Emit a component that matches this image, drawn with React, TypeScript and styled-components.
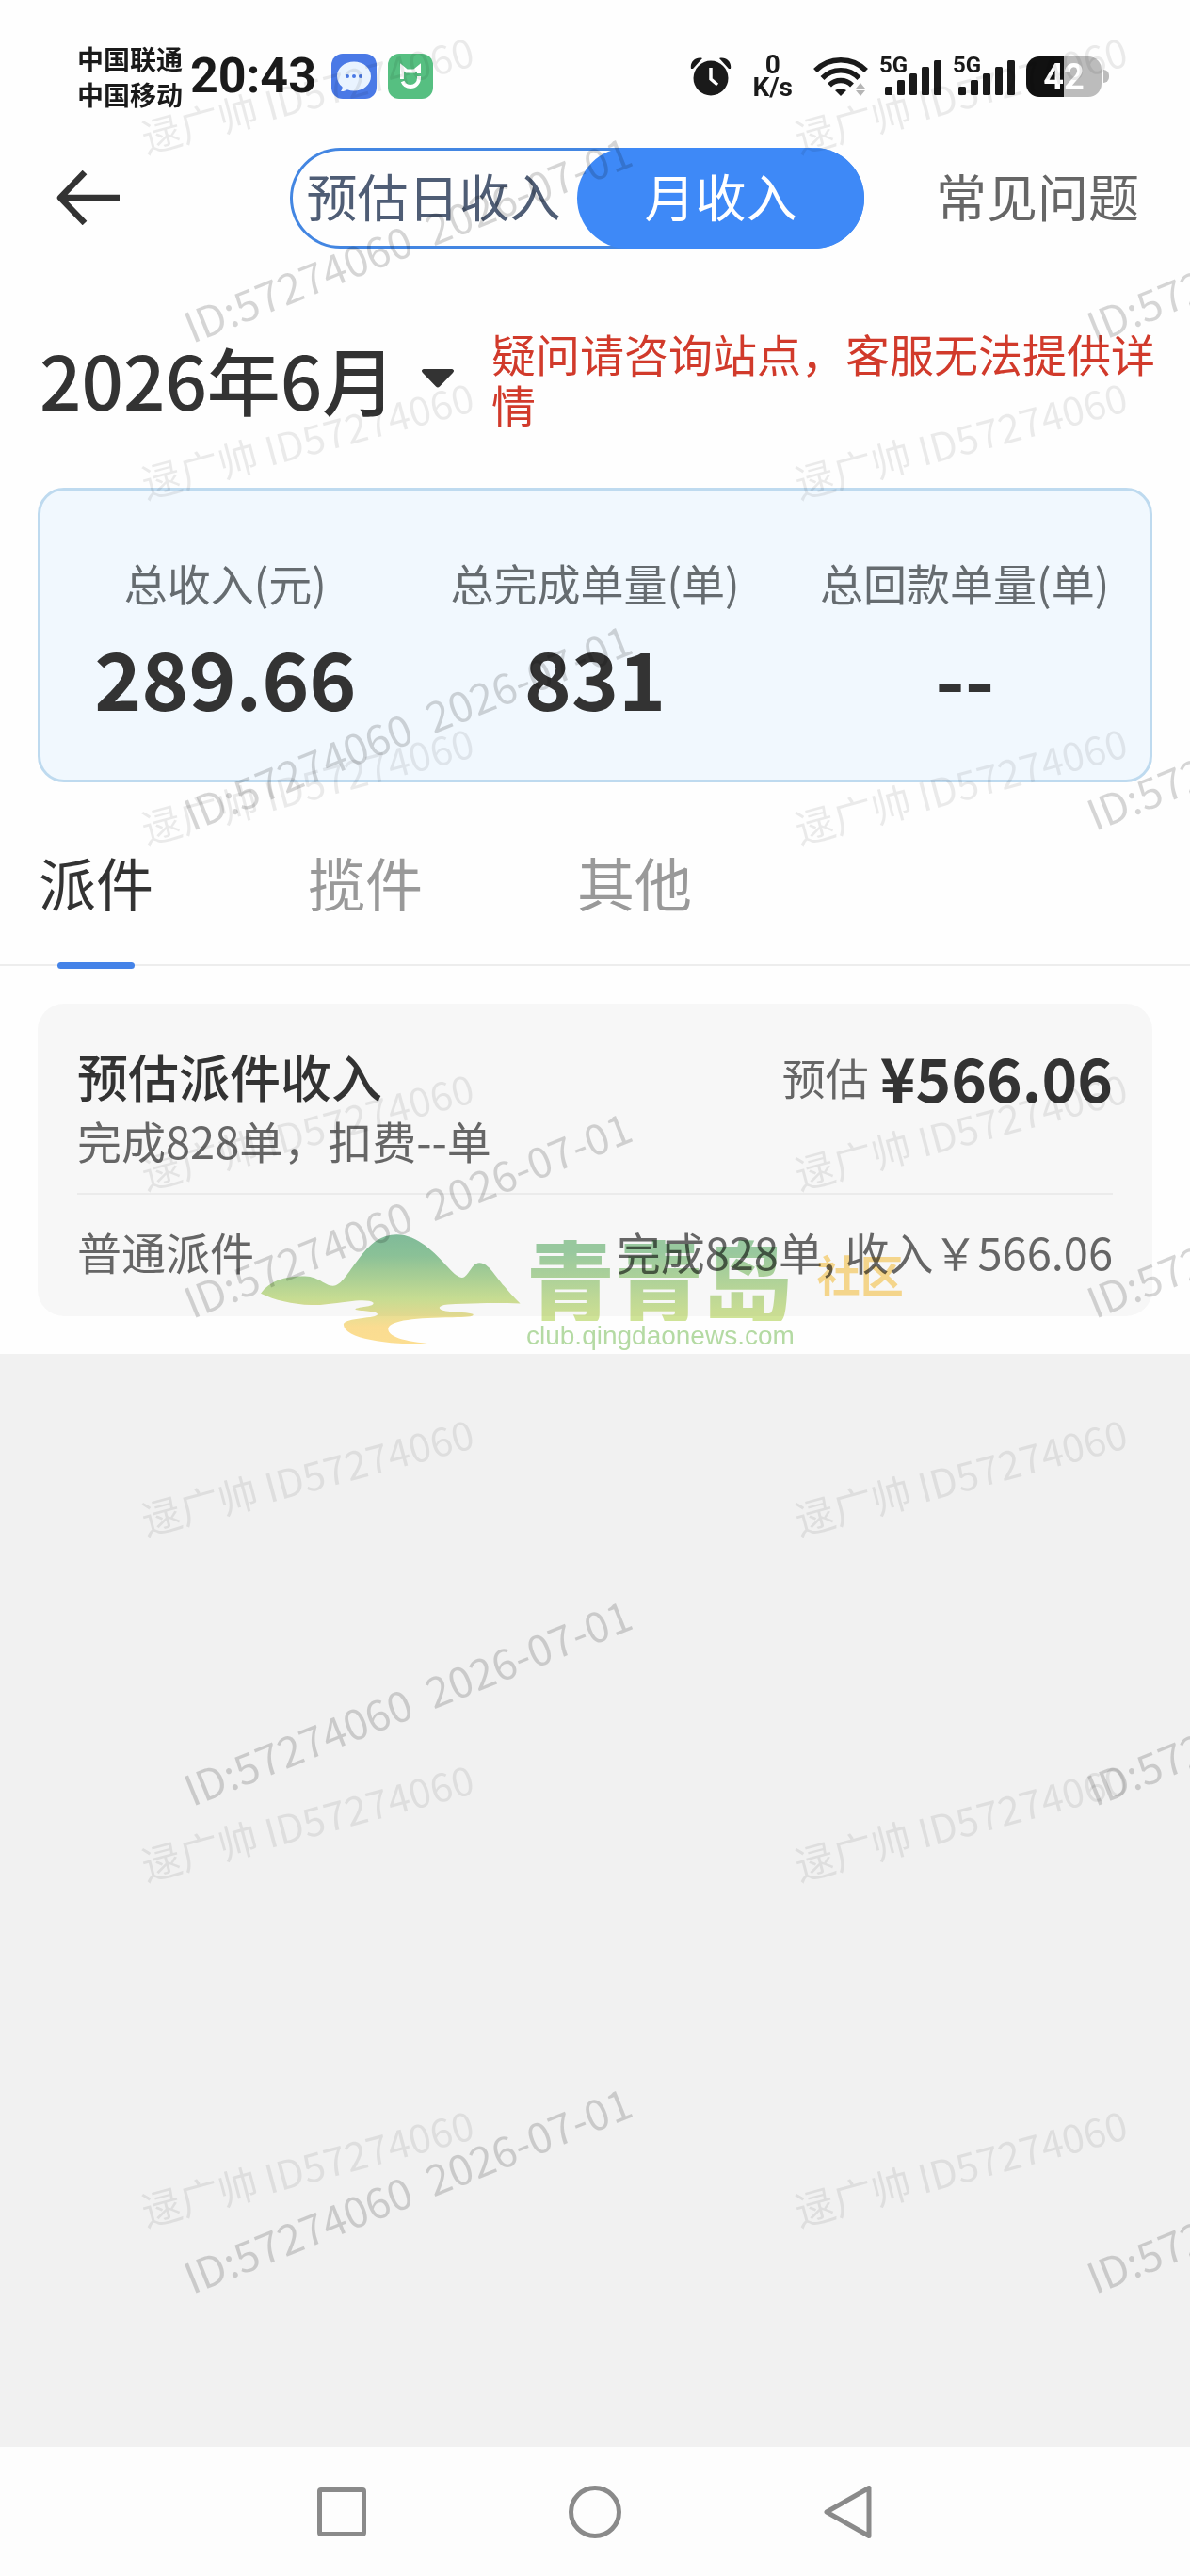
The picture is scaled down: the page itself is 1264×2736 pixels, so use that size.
import React from "react";
import styled, { createGlobalStyle } from "styled-components";

const sans = `"Noto Sans CJK SC", "Noto Sans", sans-serif`;

const GlobalStyle = createGlobalStyle`
  * { box-sizing: border-box; }
  body { margin: 0; background: #f1f1f1; font-family: ${sans}; color: #333; }
  button { font: inherit; color: inherit; border: 0; background: none; padding: 0; margin: 0; cursor: pointer; }
  p, h2 { margin: 0; }
  svg { display: block; flex: none; }
`;

const Page = styled.div`
  position: relative;
  display: flex;
  flex-direction: column;
  min-height: 100vh;
  overflow: hidden;
`;

const Sheet = styled.main`
  background: #fefefe;
  padding-bottom: 40px;
`;

/* ---------- status bar ---------- */

const StatusBar = styled.div`
  display: flex;
  align-items: center;
  justify-content: space-between;
  height: 140px;
  padding: 22px 86px 0 82px;
  color: #1a1a1a;
`;

const StatusGroup = styled.div<{ $gap: number }>`
  display: flex;
  align-items: center;
  gap: ${(p) => p.$gap}px;
`;

const Carriers = styled.div`
  display: flex;
  flex-direction: column;
  font-size: 28px;
  line-height: 38px;
  font-weight: 700;
`;

const Clock = styled.time`
  padding-right: 8px;
  font-family: Roboto, ${sans};
  font-size: 52px;
  line-height: 56px;
  font-weight: 700;
`;

const NetSpeed = styled.div`
  font-family: Roboto, ${sans};
  font-size: 28px;
  line-height: 24px;
  font-weight: 700;
  text-align: center;
`;

const Signal = styled.div`
  position: relative;
  width: 66px;
  height: 42px;
  padding-left: 6px;
`;

const SignalLabel = styled.span`
  position: absolute;
  left: 0;
  top: 0;
  font-family: Roboto, ${sans};
  font-size: 24px;
  line-height: 18px;
  font-weight: 700;
`;

const Battery = styled.div`
  display: flex;
  align-items: center;
  gap: 2px;

  &::after {
    content: "";
    width: 6px;
    height: 14px;
    border-radius: 0 6px 6px 0;
    background: #bcbcbc;
  }
`;

const BatteryBody = styled.div`
  width: 80px;
  height: 43px;
  border-radius: 14px;
  background: linear-gradient(90deg, #111 50%, #bcbcbc 50%);
  color: #fff;
  font-family: Roboto, ${sans};
  font-size: 38px;
  line-height: 45px;
  font-weight: 700;
  text-align: center;
`;

/* ---------- header ---------- */

const Header = styled.header`
  display: flex;
  align-items: center;
  gap: 76px;
  height: 140px;
  padding: 0 54px 0 60px;
  font-size: 54px;
  line-height: 80px;
`;

const BackButton = styled.button`
  margin-right: auto;
`;

const Segmented = styled.div`
  display: flex;
  flex: 0 1 610px;
  height: 107px;
  border-radius: 54px;
  box-shadow: inset 0 0 0 3px #4386e2;
`;

const Segment = styled.button<{ $active?: boolean }>`
  flex: 1;
  padding-bottom: 4px;
  border-radius: 54px;
  white-space: nowrap;
  color: ${(p) => (p.$active ? "#fff" : "#4f5d75")};
  background: ${(p) => (p.$active ? "#3e89f7" : "transparent")};
`;

const HelpLink = styled.a`
  padding-bottom: 4px;
  color: #666;
  text-decoration: none;
  white-space: nowrap;
`;

/* ---------- month ---------- */

const MonthRow = styled.section`
  display: flex;
  align-items: center;
  justify-content: space-between;
  gap: 36px;
  padding: 68px 36px 62px 42px;
`;

const MonthButton = styled.button`
  display: flex;
  align-items: center;
  gap: 28px;
  flex: none;
  font-size: 78px;
  line-height: 108px;
  font-weight: 500;
  white-space: nowrap;
`;

const Notice = styled.p`
  flex: 0 1 706px;
  font-size: 47px;
  line-height: 54px;
  color: #d13a2b;
`;

/* ---------- summary ---------- */

const Summary = styled.dl`
  display: grid;
  grid-template-columns: repeat(3, 1fr);
  margin: 0 40px;
  padding: 67px 0 60px;
  border: 3px solid #bedaef;
  border-radius: 28px;
  background: #f1f8fe;
  text-align: center;
`;

const Stat = styled.div`
  display: flex;
  flex-direction: column;
  gap: 20px;
`;

const StatLabel = styled.dt`
  font-size: 46px;
  line-height: 60px;
  color: #666c70;
`;

const StatValue = styled.dd`
  margin: 0;
  font-size: 85px;
  line-height: 100px;
  font-weight: 700;
`;

/* ---------- tabs ---------- */

const Tabs = styled.div`
  display: flex;
  gap: 164px;
  padding: 70px 41px 0;
  border-bottom: 2px solid #ededed;
`;

const Tab = styled.button<{ $active?: boolean }>`
  position: relative;
  padding-bottom: 51px;
  font-size: 61px;
  line-height: 72px;
  color: ${(p) => (p.$active ? "#333" : "#999")};

  &::after {
    content: "";
    display: ${(p) => (p.$active ? "block" : "none")};
    position: absolute;
    left: 20px;
    right: 20px;
    bottom: -5px;
    height: 7px;
    border-radius: 4px;
    background: #4483e8;
  }
`;

/* ---------- income card ---------- */

const Card = styled.section`
  position: relative;
  margin: 40px 40px 0;
  padding: 41px 42px 37px;
  border-radius: 28px;
  background: #f7f7f7;
  font-size: 47px;
  color: #666;
`;

const CardHead = styled.div`
  padding-bottom: 24px;
  border-bottom: 2px solid #ebebeb;
`;

const Line = styled.div`
  display: flex;
  align-items: center;
  justify-content: space-between;
  line-height: 64px;
`;

const CardTitle = styled.h2`
  font-size: 54px;
  line-height: 72px;
  font-weight: 500;
  color: #333;
`;

const Estimate = styled.div`
  display: flex;
  align-items: center;
  gap: 12px;
  font-size: 46px;
  line-height: 72px;

  strong {
    font-size: 64px;
    font-weight: 700;
    color: #333;
  }
`;

const CardRow = styled(Line)`
  padding-top: 28px;
`;

/* ---------- community logo ---------- */

const ClubLogo = styled.div`
  position: absolute;
  left: 237px;
  top: 245px;
  display: flex;
  align-items: flex-start;
  gap: 6px;
  mix-blend-mode: multiply;
  pointer-events: none;
`;

const ClubWords = styled.div`
  display: flex;
  flex-direction: column;
`;

const ClubName = styled.span`
  font-size: 94px;
  line-height: 92px;
  font-weight: 900;
  color: transparent;
  background: linear-gradient(#9dcfa3 20%, #d0e498 90%);
  background-clip: text;
  -webkit-background-clip: text;
`;

const ClubUrl = styled.span`
  font-family: "Liberation Sans", Arial, sans-serif;
  font-size: 28px;
  line-height: 32px;
  color: #b5dba4;
`;

const ClubTag = styled.span`
  padding: 14px 0 0 18px;
  font-size: 46px;
  line-height: 54px;
  font-weight: 700;
  color: #fcdc90;
`;

/* ---------- empty space, navigation ---------- */

const Filler = styled.div`
  flex: 1;
`;

const NavBar = styled.nav`
  display: flex;
  align-items: center;
  justify-content: center;
  gap: 213px;
  height: 137px;
  background: #fdfdfd;
`;

/* ---------- watermarks ---------- */

const WatermarkLayer = styled.div<{ $col: number; $row: number; $x: number; $y: number }>`
  position: absolute;
  inset: 0;
  display: grid;
  grid-template-columns: repeat(2, ${(p) => p.$col}px);
  grid-auto-rows: ${(p) => p.$row}px;
  padding: ${(p) => p.$y}px 0 0 ${(p) => p.$x}px;
  overflow: hidden;
  pointer-events: none;
`;

const Watermark = styled.span<{ $angle: number; $size: number; $alpha: number }>`
  justify-self: start;
  align-self: start;
  white-space: pre;
  font-size: ${(p) => p.$size}px;
  line-height: 48px;
  color: rgba(0, 0, 0, ${(p) => p.$alpha});
  transform: rotate(${(p) => p.$angle}deg);
  transform-origin: 0 100%;
`;

const MessageIcon = () => (
  <svg width="48" height="48" viewBox="0 0 48 48">
    <rect width="48" height="48" rx="12" fill="#4a79e6" />
    <path d="M24 8.500c10 0 18 6.800 18 15.500s-8 15.500-18 15.500c-2.500 0-5-.4-7.200-1.200-1.800 1.200-4 2-6.800 1.700 1-1.300 1.700-3 1.600-4.800C8 32.500 6 28.500 6 24 6 15.300 14 8.500 24 8.500z" fill="#e9f3ff" />
    <circle cx="17" cy="24" r="2" fill="#4a79e6" />
    <circle cx="24" cy="24" r="2" fill="#4a79e6" />
    <circle cx="31" cy="24" r="2" fill="#4a79e6" />
  </svg>
);

const HomeIcon = () => (
  <svg width="48" height="48" viewBox="0 0 48 48">
    <rect width="48" height="48" rx="12" fill="#56bf81" />
    <path d="M15 27V14.500l5 4h8l5-4V21" fill="none" stroke="#fff" strokeWidth="4" />
    <path d="M33 24v2c0 5-3.800 9-9 9-3.800 0-7-2.200-8.300-5.500" fill="none" stroke="#fff" strokeWidth="4" />
  </svg>
);

const AlarmIcon = () => (
  <svg width="44" height="42" viewBox="0 0 44 42">
    <path d="M1 13C-.5 6 6 0 13 2L3 13zM43 13c1.500-7-5-13-12-11l10 11z" fill="#1a1a1a" />
    <circle cx="22" cy="23" r="18.500" fill="#1a1a1a" />
    <path d="M22 12v12l7 6" fill="none" stroke="#fff" strokeWidth="3.500" />
  </svg>
);

const WifiIcon = () => (
  <svg width="58" height="42" viewBox="0 0 58 42">
    <g fill="none" stroke="#1a1a1a" strokeWidth="5.500">
      <path d="M2 15a38 38 0 0 1 54 0" />
      <path d="M9.500 23a27 27 0 0 1 39 0" />
      <path d="M17 30.500a17 17 0 0 1 24 0" />
    </g>
    <path d="M23 36q6-4 12 0l-6 6z" fill="#1a1a1a" />
    <path d="M45 34l5-6 5 6zM45 36h10l-5 6z" fill="#b5b5b5" />
  </svg>
);

const SignalIcon = () => (
  <Signal>
    <SignalLabel>5G</SignalLabel>
    <svg width="60" height="42" viewBox="0 0 60 42">
      {[0, 1, 2, 3, 4].map((i) => (
        <rect key={i} x={i * 13} y={32 - i * 7} width="8" height={9 + i * 7} rx="1.500" fill="#1a1a1a" />
      ))}
    </svg>
  </Signal>
);

const MountainIcon = () => (
  <svg width="276" height="118" viewBox="38 91 600 352" preserveAspectRatio="none">
    <defs>
      <linearGradient id="hill" x1="0" y1="0" x2="0" y2="1">
        <stop offset="0" stopColor="#84c09e" />
        <stop offset="0.18" stopColor="#8ec79c" />
        <stop offset="0.58" stopColor="#cde397" />
        <stop offset="0.84" stopColor="#fbdd92" />
        <stop offset="1" stopColor="#fddf92" />
      </linearGradient>
    </defs>
    <path
      fill="url(#hill)"
      d="M38 278C60 235 100 222 140 224C175 226 185 255 205 254C225 252 240 210 262 172C290 120 315 92 352 92C400 92 440 150 470 195C485 218 495 228 503 228C518 226 525 180 543 181C565 182 580 225 600 255C615 280 628 298 637 310C580 308 520 309 470 313C445 316 445 330 465 334C490 339 520 338 528 344C532 352 515 353 480 354C400 355 335 362 332 390C332 420 380 432 447 440C340 442 230 425 229 376C232 355 308 358 308 344C305 332 262 335 256 328C265 320 300 322 298 308C290 298 265 300 240 304C200 310 185 315 155 315C110 312 70 300 38 278Z"
    />
  </svg>
);

const stats = [
  { label: "总收入(元)", value: "289.66" },
  { label: "总完成单量(单)", value: "831" },
  { label: "总回款单量(单)", value: "--" },
];

const tabs = ["派件", "揽件", "其他"];

export default function App() {
  return (
    <Page>
      <GlobalStyle />
      <Sheet>
        <StatusBar>
          <StatusGroup $gap={8}>
            <Carriers>
              <span>中国联通</span>
              <span>中国移动</span>
            </Carriers>
            <Clock>20:43</Clock>
            <StatusGroup $gap={12}>
              <MessageIcon />
              <HomeIcon />
            </StatusGroup>
          </StatusGroup>
          <StatusGroup $gap={12}>
            <StatusGroup $gap={22}>
              <AlarmIcon />
              <NetSpeed>
                0<br />K/s
              </NetSpeed>
              <WifiIcon />
            </StatusGroup>
            <SignalIcon />
            <SignalIcon />
            <Battery>
              <BatteryBody>42</BatteryBody>
            </Battery>
          </StatusGroup>
        </StatusBar>

        <Header>
          <BackButton aria-label="返回">
            <svg width="68" height="58" viewBox="0 0 68 58" fill="none" stroke="#333" strokeWidth="6.500">
              <path d="M30 2L4 29l26 27M4 29h63" strokeLinejoin="round" />
            </svg>
          </BackButton>
          <Segmented>
            <Segment>预估日收入</Segment>
            <Segment $active>月收入</Segment>
          </Segmented>
          <HelpLink href="#help">常见问题</HelpLink>
        </Header>

        <MonthRow>
          <MonthButton>
            2026年6月
            <svg width="34" height="20" viewBox="0 0 34 20">
              <path d="M3 0h28c3 0 4 2 2 4L19 18.500q-2 2-4 0L1 4C-1 2 0 0 3 0z" fill="#333" />
            </svg>
          </MonthButton>
          <Notice>疑问请咨询站点，客服无法提供详情</Notice>
        </MonthRow>

        <Summary>
          {stats.map((s) => (
            <Stat key={s.label}>
              <StatLabel>{s.label}</StatLabel>
              <StatValue>{s.value}</StatValue>
            </Stat>
          ))}
        </Summary>

        <Tabs role="tablist">
          {tabs.map((t, i) => (
            <Tab key={t} role="tab" aria-selected={i === 0} $active={i === 0}>
              {t}
            </Tab>
          ))}
        </Tabs>

        <Card>
          <CardHead>
            <Line>
              <CardTitle>预估派件收入</CardTitle>
              <Estimate>
                <span>预估</span>
                <strong>¥566.06</strong>
              </Estimate>
            </Line>
            <Line>完成828单，扣费--单</Line>
          </CardHead>
          <CardRow>
            <span>普通派件</span>
            <span>完成828单, 收入￥566.06</span>
          </CardRow>
          <ClubLogo>
            <MountainIcon />
            <ClubWords>
              <ClubName>青青岛</ClubName>
              <ClubUrl>club.qingdaonews.com</ClubUrl>
            </ClubWords>
            <ClubTag>社区</ClubTag>
          </ClubLogo>
        </Card>
      </Sheet>

      <Filler />

      <NavBar>
        <button aria-label="最近任务">
          <svg width="56" height="56" viewBox="0 0 56 56" fill="none" stroke="#8a8a8a" strokeWidth="5">
            <rect x="4.500" y="4.500" width="47" height="47" rx="1.500" />
          </svg>
        </button>
        <button aria-label="主屏幕">
          <svg width="56" height="56" viewBox="0 0 56 56" fill="none" stroke="#8a8a8a" strokeWidth="5">
            <circle cx="28" cy="28" r="25.500" />
          </svg>
        </button>
        <button aria-label="后退">
          <svg width="56" height="56" viewBox="0 0 56 56" fill="none" stroke="#8a8a8a" strokeWidth="5">
            <path d="M5 28L50 2.500v51z" strokeLinejoin="round" />
          </svg>
        </button>
      </NavBar>

      <WatermarkLayer aria-hidden $col={694} $row={367} $x={157} $y={121}>
        {Array.from({ length: 14 }, (_, i) => (
          <Watermark key={i} $angle={-15} $size={42} $alpha={0.08}>
            逯广帅 ID57274060
          </Watermark>
        ))}
      </WatermarkLayer>
      <WatermarkLayer aria-hidden $col={959} $row={518} $x={206} $y={322}>
        {Array.from({ length: 10 }, (_, i) => (
          <Watermark key={i} $angle={-22} $size={45} $alpha={0.16}>
            {"ID:57274060  2026-07-01"}
          </Watermark>
        ))}
      </WatermarkLayer>
    </Page>
  );
}
